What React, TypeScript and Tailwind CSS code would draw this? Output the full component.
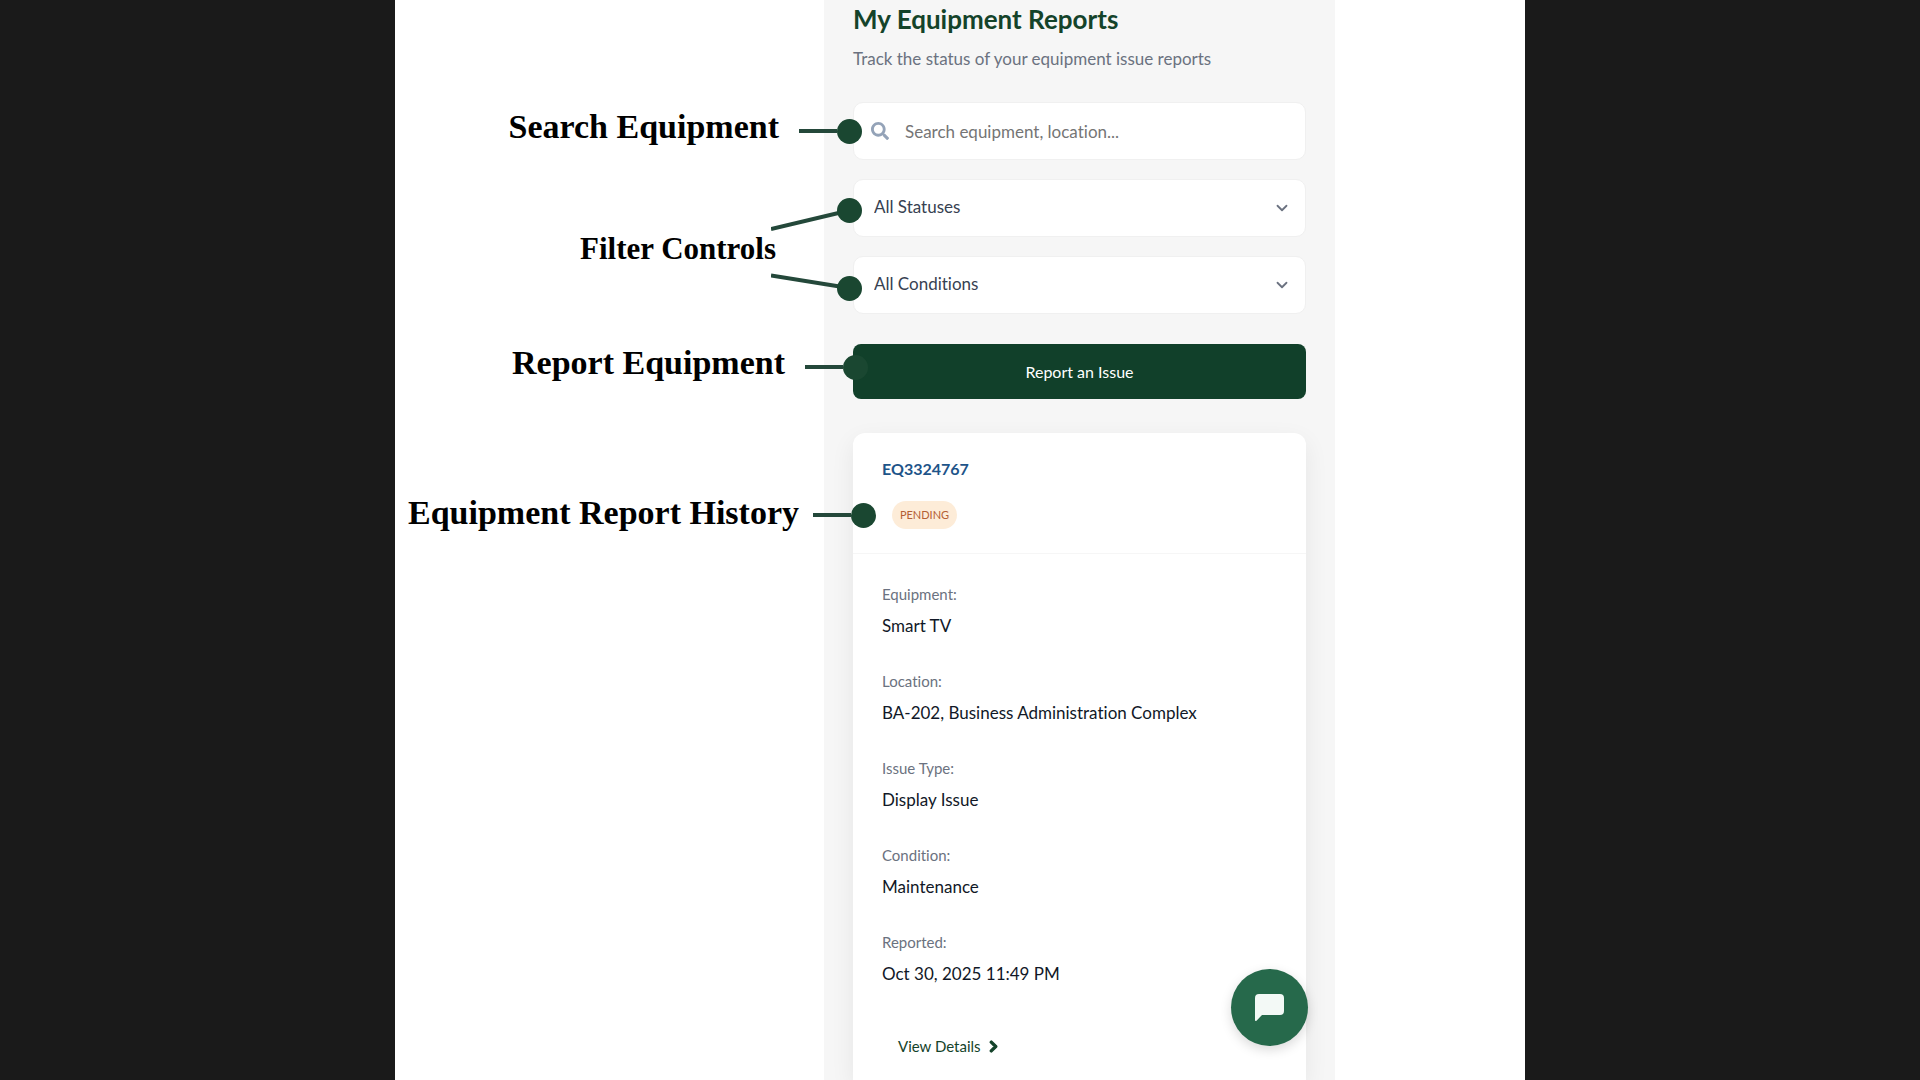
import { FaChevronRight, FaSearch } from "react-icons/fa";
import { ChevronDown } from "lucide-react";

const details = [
  { label: "Equipment:", value: "Smart TV" },
  { label: "Location:", value: "BA-202, Business Administration Complex" },
  { label: "Issue Type:", value: "Display Issue" },
  { label: "Condition:", value: "Maintenance" },
  { label: "Reported:", value: "Oct 30, 2025 11:49 PM" },
];

const noteClass =
  "whitespace-nowrap pb-2 font-['Liberation_Serif',serif] text-[34px] leading-10 font-bold text-black";

function Pointer() {
  return (
    <span className="flex items-center">
      <span className="h-1 w-[38px] bg-[#24483a]" />
      <span className="size-[25px] rounded-full bg-[#1a4731]" />
    </span>
  );
}

function FilterSelect({ id, label, option }: { id: string; label: string; option: string }) {
  return (
    <div className="relative">
      <select
        id={id}
        aria-label={label}
        className="h-[58px] w-full appearance-none rounded-[10px] border border-[#f0f0f0] bg-white px-5 pb-0.5 text-[17px] text-[#374151]"
      >
        <option>{option}</option>
      </select>
      <ChevronDown
        className="pointer-events-none absolute top-5 right-[15px] size-[18px] text-[#6b7280]"
        strokeWidth={2.4}
      />
    </div>
  );
}

export default function App() {
  return (
    <div className="min-h-screen bg-[#1a1a1a] font-[Lato,sans-serif] [font-variant-ligatures:none]">
      <div className="mx-auto grid h-screen w-full max-w-[1130px] grid-cols-[429fr_511fr_190fr] overflow-hidden bg-white">
        <main className="relative col-start-2 flex flex-col bg-[#f6f6f6] px-[29px] pt-[3px]">
          <h1 className="text-[26px] leading-8 font-bold whitespace-nowrap text-[#14432a]">My Equipment Reports</h1>
          <p className="mt-3 text-[17px] leading-6 whitespace-nowrap text-[#6b7280]">
            Track the status of your equipment issue reports
          </p>

          <form className="mt-[31px] flex flex-col gap-[19px]">
            <div className="relative">
              <input
                id="search"
                type="text"
                placeholder="Search equipment, location..."
                className="h-[58px] w-full rounded-[10px] border border-[#f0f0f0] bg-white pr-4 pl-[51px] text-[17px] text-[#374151] placeholder:text-[#757575]"
              />
              <FaSearch className="absolute top-5 left-[18px] size-[18px] text-[#94a3b8]" />
              <div className="pointer-events-none absolute top-[5px] right-full -mr-[9px] flex items-center gap-5">
                <label htmlFor="search" className={noteClass}>
                  Search Equipment
                </label>
                <Pointer />
              </div>
            </div>

            <div className="relative flex flex-col gap-[19px]">
              <FilterSelect id="status" label="All Statuses" option="All Statuses" />
              <FilterSelect id="condition" label="All Conditions" option="All Conditions" />
              <div className="pointer-events-none absolute inset-y-0 right-full -mr-[9px] flex items-center">
                <span className="-mr-[5px] pt-1 font-['Liberation_Serif',serif] text-[31px] leading-10 font-bold whitespace-nowrap text-black">
                  Filter Controls
                </span>
                <svg width="91" height="134" viewBox="0 0 91 134" aria-hidden="true">
                  <path d="M0 49 78 30.5M0 95.500 78 108" stroke="#24483a" strokeWidth="4" />
                  <circle cx="78.500" cy="30.500" r="12.500" fill="#1a4731" />
                  <circle cx="78.500" cy="108.500" r="12.500" fill="#1a4731" />
                </svg>
              </div>
            </div>
          </form>

          <div className="relative mt-[30px]">
            <button
              type="button"
              className="h-[55px] w-full rounded-lg bg-[#11402a] text-base text-white"
            >
              Report an Issue
            </button>
            <div className="pointer-events-none absolute -top-px right-full -mr-[15px] flex items-center gap-5">
              <span className={noteClass}>Report Equipment</span>
              <Pointer />
            </div>
          </div>

          <article className="relative mt-[34px] flex-1 rounded-t-xl bg-white shadow-[0_8px_24px_rgba(0,0,0,0.07)]">
            <header className="relative border-b border-[#f6f6f6] px-[29px] py-6">
              <h2 className="text-base leading-6 font-bold text-[#1e5489]">EQ3324767</h2>
              <span className="mt-5 ml-[10px] flex h-7 w-[65px] items-center justify-center rounded-full bg-[#fdecd8] text-[11px] text-[#b45f35]">
                PENDING
              </span>
              <div className="pointer-events-none absolute top-[60px] right-full -mr-[23px] flex items-center gap-[14px]">
                <span className="pb-1 font-['Liberation_Serif',serif] text-[34px] leading-10 font-bold whitespace-nowrap text-black">
                  Equipment Report History
                </span>
                <Pointer />
              </div>
            </header>
            <dl className="flex flex-col gap-[31px] px-[29px] pt-7">
              {details.map((d) => (
                <div key={d.label} className="flex flex-col gap-2">
                  <dt className="text-[15px] leading-6 text-[#6b7280]">{d.label}</dt>
                  <dd className="text-[17px] leading-6 text-[#111827]">{d.value}</dd>
                </div>
              ))}
            </dl>
            <a
              href="#details"
              className="mt-12 ml-[45px] inline-flex items-center gap-1.5 text-[15px] leading-6 text-[#14432a]"
            >
              View Details
              <FaChevronRight className="size-[13px]" stroke="currentColor" strokeWidth={50} />
            </a>
          </article>

          <button
            type="button"
            aria-label="Open chat"
            className="absolute right-[27px] bottom-[34px] flex size-[77px] items-center justify-center rounded-full bg-[#26694b] shadow-[0_4px_12px_rgba(0,0,0,0.15)]"
          >
            <svg width="29" height="27" viewBox="0 0 29 27" aria-hidden="true">
              <path
                d="M4 0H25Q29 0 29 4V17Q29 21 25 21H7L1.500 26.700Q0 27.500 0 26V4Q0 0 4 0Z"
                fill="#f3f9f6"
              />
            </svg>
          </button>
        </main>
      </div>
    </div>
  );
}
